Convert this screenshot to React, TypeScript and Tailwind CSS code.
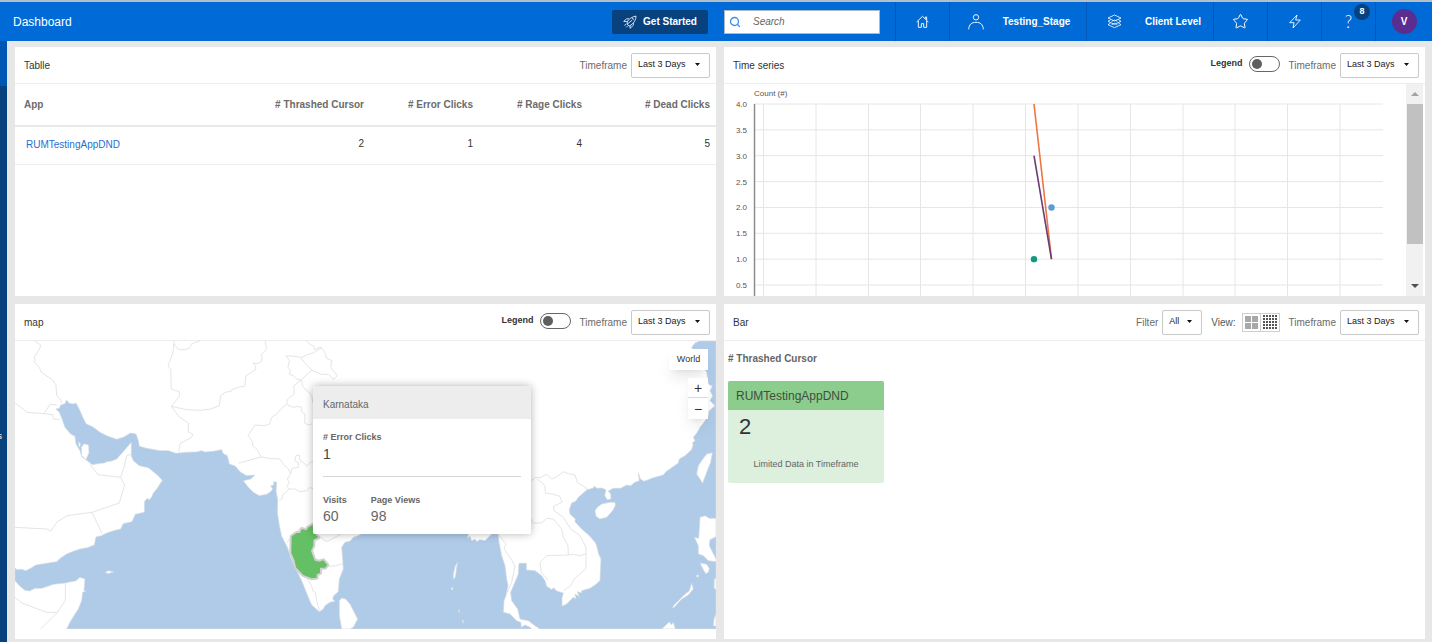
import React from 'react';
import { Search, Star } from 'lucide-react';

interface SelectBoxProps {
  id: string;
  label: string;
  value: string;
  options: string[];
  className: string;
}

const SelectBox: React.FC<SelectBoxProps> = ({ id, label, value, options, className }) => {
  return (
    <div className="flex items-center gap-1">
      <label htmlFor={id} className="text-[10px] text-[#6b6b6b]">{label}</label>
      <div className="relative">
        <select
          id={id}
          defaultValue={value}
          className={`block h-[25px] appearance-none rounded-xs border border-[#c9c9c9] bg-white pl-1.5 text-[9px] text-[#222] ${className}`}
        >
          {options.map((option) => (
            <option key={option}>{option}</option>
          ))}
        </select>
        <svg className="pointer-events-none absolute right-2.5 top-2.5 h-[3px] w-[5px]" viewBox="0 0 5 3" fill="#111">
          <path d="M0 0h5L2.5 3z" />
        </svg>
      </div>
    </div>
  );
};

const Timeframe: React.FC<{ id: string }> = ({ id }) => (
  <SelectBox id={id} label="Timeframe" value="Last 3 Days" options={['Last 24 Hours', 'Last 3 Days', 'Last 7 Days']} className="w-[79px]" />
);

const LegendToggle: React.FC<{ id: string }> = ({ id }) => (
  <div className="mb-0.5 flex items-center gap-1.5">
    <label htmlFor={id} className="text-[9px] font-bold text-[#333]">Legend</label>
    <input
      id={id}
      type="checkbox"
      className="h-4 w-[31px] appearance-none rounded-full border border-[#666] bg-white before:ml-0.5 before:mt-0.5 before:block before:size-2.5 before:rounded-full before:bg-[#5f5f5f] checked:before:ml-4"
    />
  </div>
);

interface PanelProps {
  title: string;
  actions: React.ReactNode;
  children: React.ReactNode;
}

const Panel: React.FC<PanelProps> = ({ title, actions, children }) => (
  <section className="flex min-w-0 flex-col bg-white">
    <div className="flex h-[37px] shrink-0 items-center justify-between border-b border-[#ececec] pl-[9px] pr-1.5">
      <h2 className="text-[10px] text-[#333]">{title}</h2>
      <div className="flex items-center gap-[9px]">{actions}</div>
    </div>
    {children}
  </section>
);

const headerCell = 'flex h-full items-center justify-center border-l border-[#0059b8]';

const Header: React.FC = () => (
  <header className="flex h-[41px] items-center border-t-2 border-[#b4bfc9] bg-[#006bd6] text-[10px] text-white">
    <h1 className="flex-1 pl-[13px] text-xs">Dashboard</h1>
    <button className="mr-4 flex h-6 w-24 items-center justify-center gap-1.5 rounded-xs bg-[#07427f] font-bold">
      <svg className="size-[14px]" viewBox="0 0 42 42" fill="none" stroke="currentColor" strokeWidth="2.4" strokeLinejoin="round">
        <path d="M39 3C26 6 16 13 13 20l-1 8 7 5 8-5C35 21 39 12 39 3z" />
        <path d="M18 11 10 12 2 19l11 1M31 23v8l-10 9 0-9M27 9l6 5M12 28l16-13M8 27l-3 5M14 33l-4 4" />
      </svg>
      Get Started
    </button>
    <label className="mr-[15px] flex h-6 w-[156px] items-center border border-[#a9b7c6] bg-white pl-1 text-[#3c8fe6]">
      <Search className="size-3" strokeWidth={2.6} />
      <input aria-label="Search" placeholder="Search" className="ml-3 w-28 text-[10px] italic text-[#444] outline-none placeholder:text-[#666]" />
    </label>
    <a href="#home" aria-label="Home" className={`w-[54px] ${headerCell}`}>
      <svg className="size-[13px]" viewBox="0 0 39 39" fill="none" stroke="currentColor" strokeWidth="2.8">
        <path d="M2 21 19.500 4 37 21M7 18v19h9V26h7v11h9V18M28 11V6h4v9" />
      </svg>
    </a>
    <a href="#stage" className={`w-[137px] gap-[19px] pl-0.5 font-bold ${headerCell}`}>
      <svg className="size-4" viewBox="0 0 48 48" fill="none" stroke="currentColor" strokeWidth="2.8">
        <circle cx="24" cy="10" r="8" />
        <path d="M2 46c1-15 9-21 22-21s21 6 22 21" />
      </svg>
      Testing_Stage
    </a>
    <a href="#client" className={`w-[127px] gap-[23px] pl-2 font-bold ${headerCell}`}>
      <svg className="size-[15px]" viewBox="0 0 45 45" fill="none" stroke="currentColor" strokeWidth="2.4" strokeLinejoin="round">
        <path d="M22.500 3 42 12 22.500 21 3 12z" />
        <path d="m11 17-8 5 19.500 9L42 22l-8-5M11 27l-8 5 19.500 9L42 32l-8-5M14 22l8.500-4 8.500 4M14 32l8.500-4 8.500 4" />
      </svg>
      Client Level
    </a>
    <a href="#favorites" aria-label="Favorites" className={`w-[54px] ${headerCell}`}>
      <Star className="size-[17px]" strokeWidth={1.4} />
    </a>
    <a href="#activity" aria-label="Activity" className={`w-[54px] ${headerCell}`}>
      <svg className="h-[15px] w-[12px]" viewBox="0 0 36 45" fill="none" stroke="currentColor" strokeWidth="2.6" strokeLinejoin="round">
        <path d="M24 3 2 26h13l-3 16 22-24H20z" />
      </svg>
    </a>
    <a href="#help" className={`relative w-[54px] font-[Lato] text-[17px] font-light ${headerCell}`}>
      ?
      <span className="absolute left-8 top-0.5 flex size-4 items-center justify-center rounded-full bg-[#07427f] font-['Liberation_Sans'] text-[9px] font-bold">8</span>
    </a>
    <div className={`w-[57px] ${headerCell}`}>
      <button className="size-[25px] rounded-full bg-[#5b2d91] font-bold">V</button>
    </div>
  </header>
);

const columns = ['# Thrashed Cursor', '# Error Clicks', '# Rage Clicks', '# Dead Clicks'];
const rows = [{ app: 'RUMTestingAppDND', counts: [2, 1, 4, 5] }];

const ClicksTable: React.FC = () => (
  <table className="w-full table-fixed text-[10px]">
    <colgroup>
      <col />
      <col className="w-[109px]" />
      <col className="w-[109px]" />
      <col className="w-[109px]" />
      <col className="w-[128px]" />
    </colgroup>
    <thead>
      <tr className="h-[42px] border-b-2 border-[#e9e9e9] text-[#6b6b6b]">
        <th className="pl-[9px] text-left">App</th>
        {columns.map((column) => (
          <th key={column} className="whitespace-nowrap pr-1.5 text-right">{column}</th>
        ))}
      </tr>
    </thead>
    <tbody>
      {rows.map((row) => (
        <tr key={row.app} className="h-[38px] border-b border-[#ececec] text-[#333]">
          <td className="pb-0.5 pl-[11px]"><a href="#app" className="text-[#1f6fd0]">{row.app}</a></td>
          {row.counts.map((count, i) => (
            <td key={columns[i]} className="pb-1 pr-1.5 text-right">{count}</td>
          ))}
        </tr>
      ))}
    </tbody>
  </table>
);

const ticks = ['4.0', '3.5', '3.0', '2.5', '2.0', '1.5', '1.0', '0.5'];
const xLines = [39.5, 92, 144.5, 196.5, 249, 301.5, 354, 406.5, 459, 511, 563.5, 616];

// 0.5 on the count axis is 25.86 units tall, starting from 4.0 at the top
const yOf = (value: number) => 20 + (4 - value) * 51.72;

const TimeSeries: React.FC = () => (
  <div className="flex">
    <svg className="min-w-0 flex-1" viewBox="0 0 682 212" fontFamily="Liberation Sans, sans-serif" fontSize="8" fill="#555">
      <text x="30" y="12">Count (#)</text>
      {ticks.map((tick) => (
        <g key={tick}>
          <path d={`M30 ${yOf(Number(tick))}H659`} stroke="#e6e6e6" />
          <text x="23" y={yOf(Number(tick)) + 3} textAnchor="end">{tick}</text>
        </g>
      ))}
      {xLines.map((x) => (
        <path key={x} d={`M${x} 20V212`} stroke="#e6e6e6" />
      ))}
      <path d="M30.500 20V212" stroke="#8d8d8d" strokeWidth="1.5" />
      <path d={`M310 ${yOf(4)}L327.500 ${yOf(1)}`} stroke="#ee7544" strokeWidth="1.6" />
      <path d={`M310 ${yOf(3)}L327.500 ${yOf(1)}`} stroke="#6b3b72" strokeWidth="1.6" />
      <circle cx="327.500" cy={yOf(2)} r="3.200" fill="#5b9bd8" />
      <circle cx="310" cy={yOf(1)} r="3.200" fill="#129a80" />
    </svg>
    <div className="mr-0.5 flex w-[17px] flex-col items-center bg-[#f1f1f1]">
      <svg className="my-2 h-1 w-2" viewBox="0 0 8 4" fill="#a3a3a3"><path d="M0 4h8L4 0z" /></svg>
      <div className="h-[140px] w-4 bg-[#c1c1c1]" />
      <svg className="mb-2 mt-auto h-1 w-2" viewBox="0 0 8 4" fill="#505050"><path d="M0 0h8L4 4z" /></svg>
    </div>
  </div>
);

const sea = [
  'M45 808 52 812 64 811 78 815 92 808 108 798 140 793 170 788 182 777 200 765 220 757 240 750 262 746 283 738 288 714 304 710 320 702 345 694 362 690 370 674 396 668 406 646 433 640 434 606 443 598 448 603 455 594 460 582 472 568 487 544 472 528 460 518 445 506 418 500 400 485 394 470 394 430 385 440 368 460 350 480 335 486 320 488 313 492 300 493 277 497 262 485',
  '245 473 240 455 228 435 225 412 212 405 195 385 187 362 178 340 168 330 178 328 182 318 195 314 200 303 207 313 220 315 228 312 240 335 247 352 258 374 280 385 300 400 320 410 350 421 370 415 380 409 392 402 408 405 415 425 418 442 440 448 480 455 505 455 528 463 560 460 590 459 605 455 614 459 640 457 665 452 670 464 682 470 688 495 705 501 722 520 740 530 765 528 752 540 730 545 745 565 760 580 778 590 800 586 812 578 818 570 812 560 822 558 820 548 830 550 828 575 833 603 832 640 838 680 845 712 862 745 872 775 888 810 905 845 925 895 935 918 958 938 970 930 975 920 990 910 1005 907 998 900 1001 890 1015 878 1018 840 1030 810 1028 780 1025 745 1035 730 1050 727 1060 715 1070 712 1085 705 1095 690 1390 690',
  '1405 705 1402 718 1410 712 1415 726 1425 720 1430 728 1440 722 1455 725 1475 705 1494 705 1497 730 1505 770 1515 800 1520 840 1524 860 1518 890 1512 905 1510 940 1530 945 1550 965 1562 970 1564 985 1575 978 1590 985 1595 990H200L210 970 222 950 235 930 245 905 248 880 258 877 252 875 255 840 240 835 228 845 195 852 160 856 148 860 125 868 105 868 88 876 75 874 60 862 45 845z',
  'M1620 990 1605 980 1585 965 1560 960 1553 930 1535 905 1532 880 1545 850 1555 825 1557 793H1579V813L1605 815 1625 830 1635 845 1640 862 1656 872 1660 866 1670 876 1690 882 1686 897 1686 922 1700 915 1720 895 1728 900 1725 885 1738 893 1732 878 1745 882 1745 875 1770 868 1785 858 1800 845 1802 800 1803 780 1796 765 1790 740 1785 730 1770 712 1745 690 1725 668 1726 660 1710 645 1708 632 1715 612 1728 606 1735 595 1750 582 1760 573 1780 567 1783 561 1790 568 1805 567 1818 572 1814 590 1822 602 1833 600 1832 585 1825 576 1840 568 1862 568 1880 558 1892 560 1905 550 1918 545 1915 522 1921 540 1932 547 1945 542 1960 536 1990 528 1998 518 2015 506 2035 492 2038 480 2055 470 2075 452 2080 436 2076 433 2085 425 2080 415 2092 400 2100 385 2112 370 2125 350 2127 336 2145 320 2130 305 2138 290 2130 275 2137 262 2125 255 2120 220 2110 205 2100 195 2085 165 2075 145 2085 132 2098 126H2148V990z',
].join(' ');

const islands =
  'M1018 905 1025 897 1037 900 1050 915 1073 960 1060 985 1050 990H1025L1018 950zM1785 635 1792 625 1805 615 1830 610 1845 610 1846 620 1838 635 1820 655 1800 660 1788 652zM2137 461 2120 465 2105 485 2095 500 2090 525 2108 553 2120 520 2132 490zM2100 655 2115 650 2128 658 2148 658V713L2130 722 2128 740 2148 780V788L2125 785 2110 770 2095 765 2095 740 2083 715 2096 718 2098 690zM2100 792 2120 796 2128 808 2126 818 2118 825 2110 812zM2018 925 2022 918 2050 890 2068 875 2075 852 2080 870 2065 888 2045 900 2020 928zM1985 990 1998 978 2008 968 2014 977 2020 970 2026 990zM1372 790 1366 800 1360 825 1360 840 1366 835zM315 820 325 815 342 818 325 824zM245 470 244 445 252 434 266 438 267 462 258 482zM236 430 241 432 240 445 236 440zM1354 866h5v6h-5zM1376 930l3 12-3-4zM1387 960l4 8-3 5zM2143 840 2148 838V872L2142 868zM2142 960 2148 945V982L2140 980zM2090 828h6v6h-6z';

const borders = [
  'M104 126 122 138 118 152 104 172 104 190 118 205 124 220 158 243 168 258 170 290 180 300 186 312',
  'M45 312 82 340 132 344 150 316 170 318 M132 344 158 347 160 360 180 362',
  'M45 685 140 690 152 696 172 668 202 650 276 640 358 612 374 558 362 535 294 527 270 497 M362 535 372 505 380 470 392 466 M276 640 306 704',
  'M45 895 66 912 140 940 172 940 196 905 196 853 M172 940 122 990',
  'M522 126 520 155 512 180 504 200 512 212 514 270 538 278 538 292 514 322 536 352 565 372 565 400 578 405 575 415 540 434 536 460',
  'M522 135 532 148 540 152 555 152 568 148 575 134 600 126 M514 322 560 332 600 334 632 330 658 320 662 290 675 280 695 276 695 272 718 264 734 262 738 230 752 222 768 210 766 200 758 192 772 194 786 186 785 165 800 150 795 126',
  'M920 126 932 138 942 142 944 152 962 144 975 160 980 178 996 185 992 205 1002 218 1012 230 1000 242 992 232 985 226 965 226 936 214 918 196 900 174 880 172 858 170 868 185 864 205 872 215 868 225 880 230 890 240 904 243 918 228 936 214',
  'M965 146 940 162 920 168 904 176 M904 243 908 262 915 270 930 282 936 295 938 312 M904 243 882 260 882 285 862 302 860 314 M860 316 845 328 830 345 815 355 808 376 792 380 765 378 744 410 756 425 758 440 770 450 784 474 805 478 840 480 850 496 864 508 872 524 862 540 868 552 860 562 868 570 848 588 846 600 838 604',
  'M860 316 880 325 892 322 905 325 905 338 915 345 914 372 924 378 935 375 M872 524 876 508 895 505 895 490 884 486 888 470 898 468 900 485 912 492 920 502 930 490 940 488 M868 570 885 570 900 578 920 575 930 565 940 570 M784 474 760 480 740 486 716 492',
  'M860 732 875 712 900 690 M950 720 965 715 975 726 985 726 1005 715 1030 700 M985 802 1010 800 1028 794 M922 840 935 860 938 875 946 880 950 905 958 935',
  'M1593 545 1606 536 1620 536 1640 526 1655 540 1672 532 1690 518 1705 524 1725 528 1732 550 1765 572 M1612 540 1635 560 1636 582 1660 586 1680 592 1686 610 1660 622 1662 635 1690 655 1712 690 1740 710 1758 745 1758 765 1740 770 1720 766 1705 768 1704 740 1690 715 1685 690 1660 660 1640 658 1625 672 1600 672 1593 660',
  'M1620 790 1640 770 1705 768 M1620 790 1624 820 1645 845 M1758 765 1758 808 1740 825 1722 840 1712 860 1690 876 M1494 705 1518 735 1512 750 1530 775 1545 800 1535 850 1522 880',
].join(' ');

const karnataka =
  'M938 678 940 700 955 715 940 722 940 740 933 755 940 775 945 785 958 788 970 784 982 798 975 806 960 806 960 822 950 826 950 836 935 838 910 828 888 805 884 785 874 762 875 712 890 702 900 702 905 690 920 694 924 686z';

const MapChart: React.FC = () => (
  <div className="relative pb-2.5">
    <svg className="block w-full" viewBox="45 126 2103 864" strokeLinejoin="round">
      <path d={borders} fill="none" stroke="#e4e5e8" strokeWidth="3" />
      <path d={sea} fill="#b0cbe8" stroke="#d3d9df" strokeWidth="2" />
      <path d={islands} fill="#fff" stroke="#d3d9df" strokeWidth="2" />
      <path d={karnataka} fill="#65bf65" stroke="#d2d2d2" strokeWidth="12" paintOrder="stroke" />
    </svg>

    <div className="absolute right-2 top-2 flex flex-col items-end gap-2 text-[#333]">
      <button className="h-[21px] w-[39px] bg-white text-[9px] shadow-lg">World</button>
      <div className="flex flex-col divide-y divide-[#d9d9d9] bg-white text-sm leading-none shadow-lg">
        <button aria-label="Zoom in" className="h-5 w-5">+</button>
        <button aria-label="Zoom out" className="h-[21px] w-5">−</button>
      </div>
    </div>

    <div className="absolute left-[298px] top-[45px] w-[218px] rounded-xs bg-white text-[9px] text-[#666] shadow-[0_0_8px_rgba(0,0,0,0.3)]">
      <div className="flex h-[33px] items-center rounded-t-xs bg-[#ededed] px-2.5 pt-1 text-[10px]">Karnataka</div>
      <div className="px-2.5 pb-2">
        <div className="border-b border-[#d6d6d6] pb-[11px] pt-3">
          <div className="font-bold leading-3">{columns[1]}</div>
          <div className="text-sm leading-[22px] text-[#444]">1</div>
        </div>
        <div className="flex gap-6 pt-[17px]">
          <div>
            <div className="font-bold leading-3">Visits</div>
            <div className="text-sm leading-5">60</div>
          </div>
          <div>
            <div className="font-bold leading-3">Page Views</div>
            <div className="text-sm leading-5">98</div>
          </div>
        </div>
      </div>
    </div>
  </div>
);

const ViewSwitch: React.FC = () => (
  <div className="flex items-center gap-1.5 text-[10px] text-[#555]">
    View:
    <div className="flex divide-x divide-[#cfcfcf] border border-[#cfcfcf]">
      <button aria-label="Large tiles" className="flex h-[17px] w-[18px] items-center justify-center">
        <svg className="size-[13px]" viewBox="0 0 13 13" fill="#a8a8a8">
          <path d="M0 0h6v6H0zM7 0h6v6H7zM0 7h6v6H0zM7 7h6v6H7z" />
        </svg>
      </button>
      <button aria-label="Small tiles" className="flex h-[17px] w-[18px] items-center justify-center">
        <svg className="size-[14px]" viewBox="0 0 14 14" stroke="#555" strokeWidth="2" strokeDasharray="2 1">
          <path d="M0 1h14M0 4h14M0 7h14M0 10h14M0 13h14" />
        </svg>
      </button>
    </div>
  </div>
);

const BarTiles: React.FC = () => (
  <div className="px-1 pt-3 text-[#666]">
    <h3 className="text-[10px] font-bold leading-3">{columns[0]}</h3>
    <div className="mt-4 h-[102px] w-[156px] overflow-hidden rounded-xs bg-[#ddefdd]">
      <div className="flex h-[29px] items-center bg-[#8ccc8c] px-2 text-xs text-[#3f4f3f]">{rows[0].app}</div>
      <div className="pl-[11px] pt-1 text-[22px] leading-[26px] text-[#333]">2</div>
      <p className="pt-4 text-center text-[9px] leading-4">Limited Data in Timeframe</p>
    </div>
  </div>
);

const App: React.FC = () => {
  return (
    <div className="flex min-h-screen flex-col bg-[#e7e7e7] font-['Liberation_Sans',Arial,sans-serif]">
      <Header />
      <div className="flex flex-1">
        <nav className="flex w-[7px] shrink-0 flex-col overflow-hidden bg-[#07427f]">
          <div className="h-[45px] bg-[#0057b3]" />
          <a href="#reports" className="mt-[344px] flex w-0.5 justify-end text-[9px] text-white">s</a>
        </nav>
        <main className="grid flex-1 grid-cols-2 content-start gap-2 pb-0.5 pl-2 pr-[7px] pt-1.5">
          <Panel title="Tablle" actions={<Timeframe id="table-timeframe" />}>
            <ClicksTable />
          </Panel>
          <Panel
            title="Time series"
            actions={
              <>
                <LegendToggle id="series-legend" />
                <Timeframe id="series-timeframe" />
              </>
            }
          >
            <TimeSeries />
          </Panel>
          <Panel
            title="map"
            actions={
              <>
                <LegendToggle id="map-legend" />
                <Timeframe id="map-timeframe" />
              </>
            }
          >
            <MapChart />
          </Panel>
          <Panel
            title="Bar"
            actions={
              <>
                <SelectBox id="bar-filter" label="Filter" value="All" options={['All']} className="w-10" />
                <ViewSwitch />
                <Timeframe id="bar-timeframe" />
              </>
            }
          >
            <BarTiles />
          </Panel>
        </main>
      </div>
    </div>
  );
};

export default App;
